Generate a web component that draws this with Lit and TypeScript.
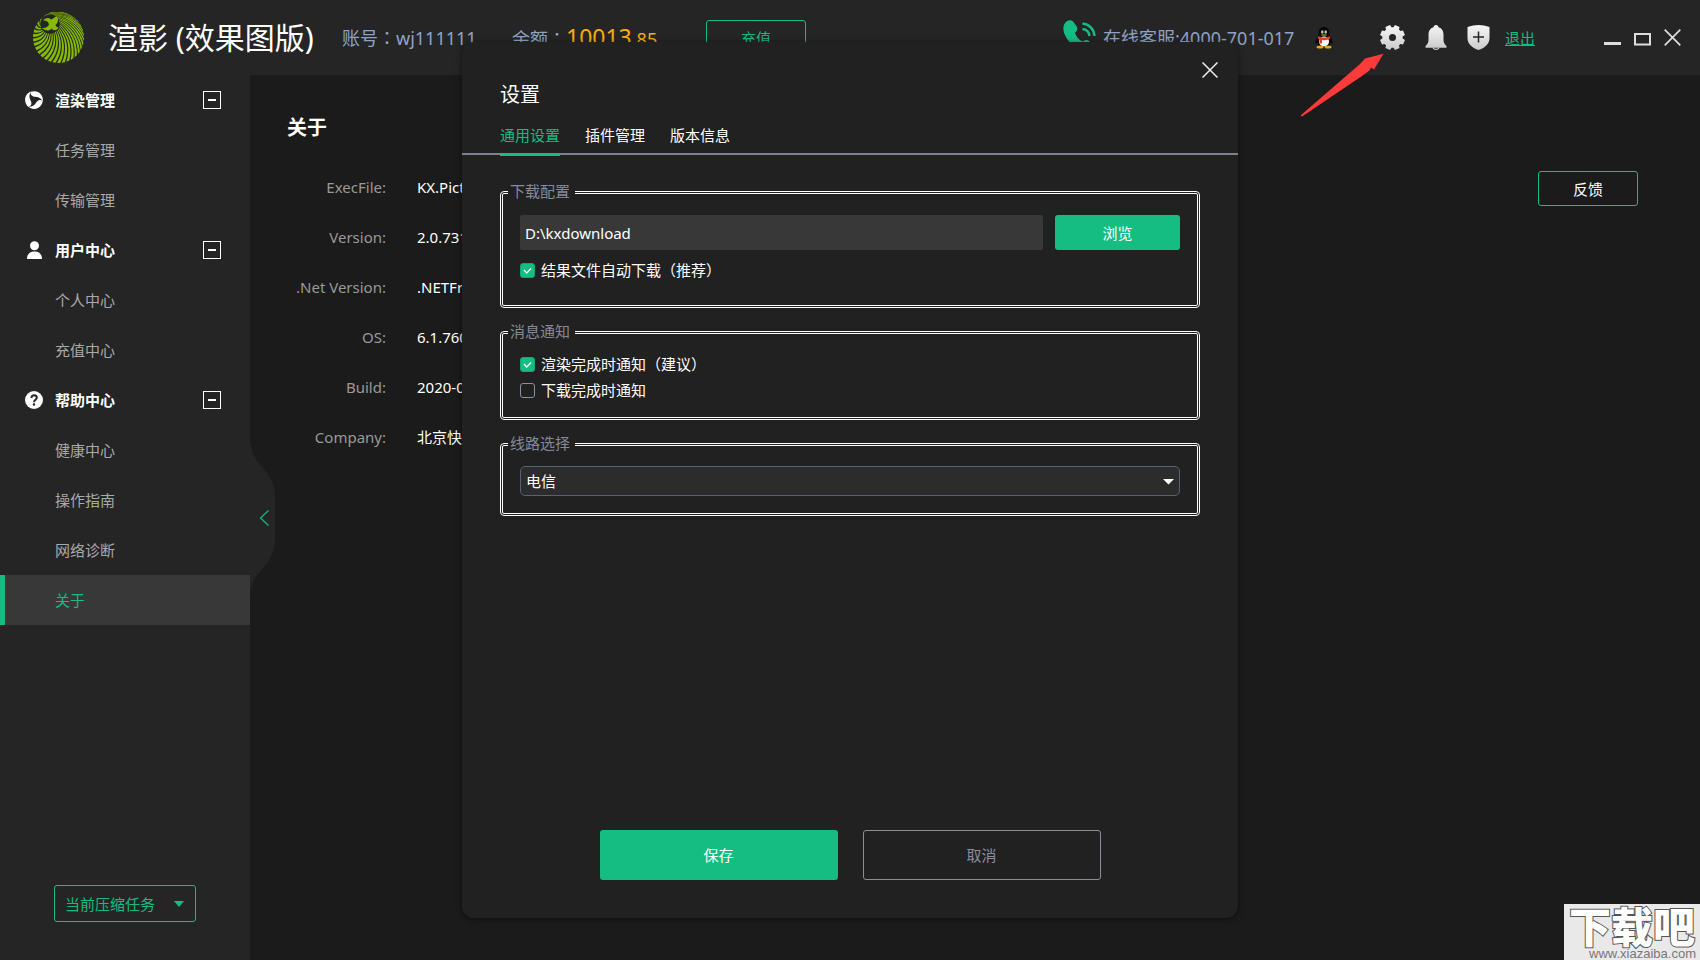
import { LitElement, html, css, svg } from "lit";
import { customElement, state } from "lit/decorators.js";

interface NavGroup {
  icon: "render" | "user" | "help";
  title: string;
  items: string[];
}

const NAV: NavGroup[] = [
  { icon: "render", title: "渲染管理", items: ["任务管理", "传输管理"] },
  { icon: "user", title: "用户中心", items: ["个人中心", "充值中心"] },
  { icon: "help", title: "帮助中心", items: ["健康中心", "操作指南", "网络诊断", "关于"] },
];

const ABOUT: [string, string][] = [
  ["ExecFile:", "KX.Pict"],
  ["Version:", "2.0.731"],
  [".Net Version:", ".NETFr"],
  ["OS:", "6.1.760"],
  ["Build:", "2020-0"],
  ["Company:", "北京快"],
];

const TABS = ["通用设置", "插件管理", "版本信息"];

/* Swirling feather strokes running from the hub to the rim of the logo. */
function feathers(): string[] {
  const count = 34;
  const hub = { x: 17, y: 12, r: 9.5 };
  const rim = { x: 25.5, y: 25.5, r: 25.5 };
  const at = (c: { x: number; y: number; r: number }, a: number) =>
    [c.x + Math.cos(a) * c.r, c.y + Math.sin(a) * c.r] as const;
  const f = (p: readonly [number, number]) => `${p[0].toFixed(2)} ${p[1].toFixed(2)}`;
  const out: string[] = [];
  for (let i = 0; i < count; i++) {
    const a = (i / count) * Math.PI * 2;
    const step = (Math.PI * 2) / count;
    const s = at(hub, a);
    const s2 = at(hub, a + step * 0.5);
    const e = at(rim, a + 0.95);
    const e2 = at(rim, a + 0.95 + step * 0.66);
    const mid = (p: readonly [number, number], q: readonly [number, number], b: number) => {
      const dx = q[0] - p[0];
      const dy = q[1] - p[1];
      return [(p[0] + q[0]) / 2 + dy * b, (p[1] + q[1]) / 2 - dx * b] as const;
    };
    out.push(`M${f(s)}Q${f(mid(s, e, 0.28))} ${f(e)}L${f(e2)}Q${f(mid(s2, e2, 0.28))} ${f(s2)}Z`);
  }
  return out;
}

function gearPath(): string {
  const pts: string[] = [];
  const teeth = 8;
  for (let i = 0; i < teeth; i++) {
    const base = (i / teeth) * Math.PI * 2 + Math.PI / 8;
    for (const [off, r] of [[-0.29, 10.2], [-0.2, 12.7], [0.2, 12.7], [0.29, 10.2]]) {
      const a = base + off;
      pts.push(`${(12.5 + Math.cos(a) * r).toFixed(2)} ${(12.5 + Math.sin(a) * r).toFixed(2)}`);
    }
  }
  return `M${pts.join("L")}ZM12.5 9a3.5 3.5 0 1 0 0 7a3.5 3.5 0 1 0 0-7Z`;
}

const silver = (id: string) => svg`<linearGradient id=${id} x1="0" y1="0" x2="0" y2="1">
  <stop offset="0" stop-color="#f6f6f6"/><stop offset="1" stop-color="#cccccc"/></linearGradient>`;

const navIcons = {
  render: html`<svg width="18" height="18" viewBox="0 0 18 18" aria-hidden="true">
    <g fill="#fff">
      <path id="blade" d="M6.2 .6C2.6 1.700 .1 5 .1 8.900c0 2.900 1.400 5.400 3.500 7C6.200 15.300 6.900 13 6.200 10.800C5.400 8.600 4.300 7.500 4.500 5.200C4.600 3.200 5.200 1.700 6.200 .6Z"/>
      <use href="#blade" transform="rotate(120 9 9)"/>
      <use href="#blade" transform="rotate(240 9 9)"/>
    </g></svg>`,
  user: html`<svg width="18" height="18" viewBox="0 0 18 18" aria-hidden="true">
    <g fill="#fff"><circle cx="9.500" cy="4.800" r="4.500"/><path d="M2 18c0-4.500 2.200-7.600 7.500-7.600S17 13.500 17 18Z"/></g></svg>`,
  help: html`<svg width="18" height="18" viewBox="0 0 18 18" aria-hidden="true">
    <circle cx="9" cy="9" r="9" fill="#fff"/>
    <path d="M6.400 7C6.400 5.200 7.500 4.200 9.100 4.200S11.800 5.200 11.800 6.700C11.800 8.700 9 8.800 9 11.200" fill="none" stroke="#252525" stroke-width="1.900"/>
    <circle cx="9" cy="13.500" r="1.200" fill="#252525"/></svg>`,
};

@customElement("app-root")
export class AppRoot extends LitElement {
  @state() private tab = 0;
  @state() private active = "关于";

  static styles = css`
    :host {
      display: flex;
      flex-direction: column;
      min-height: 100vh;
      position: relative;
      overflow: hidden;
      background: #1b1b1b;
      color: #fff;
      font-family: "Noto Sans", "Noto Sans CJK SC", sans-serif;
      font-size: 15px;
      line-height: 20px;
    }
    *, *::before, *::after { box-sizing: border-box; }
    button {
      font: inherit;
      color: inherit;
      background: none;
      border: 0;
      padding: 0;
      cursor: pointer;
    }
    svg { display: block; flex: none; }
    h1, h2, h3, dl, dd, ul { margin: 0; padding: 0; }
    a { color: inherit; }

    .header {
      display: flex;
      align-items: center;
      height: 75px;
      padding: 0 19px 0 33px;
      background: #252525;
      white-space: nowrap;
    }
    .brand {
      font-size: 30px;
      line-height: 40px;
      font-weight: 400;
      min-width: 234px;
      margin-left: 24px;
    }
    .meta { font-size: 18px; line-height: 24px; color: #8ea3c5; }
    .account { min-width: 170px; }
    .balance { min-width: 194px; }
    .colon { font-family: "Noto Sans CJK TC", sans-serif; }
    .money { color: #f9ad0a; }
    .big { font-size: 23px; }
    .outline {
      width: 100px;
      height: 35px;
      border: 1px solid #15bd82;
      border-radius: 3px;
    }
    .green { color: #15bd82; }
    .tools { display: flex; align-items: center; margin-left: auto; }
    .hotline { width: 192px; margin: 0 20px 0 7px; }
    .iconset { display: flex; align-items: center; gap: 20px; margin: 0 15px 0 47px; }
    .window { display: flex; gap: 13px; margin-left: 69px; }

    .body { display: flex; flex: 1; }
    .side {
      position: relative;
      display: flex;
      flex-direction: column;
      width: 250px;
      background: #252525;
    }
    .group {
      display: flex;
      align-items: center;
      height: 50px;
      padding: 0 29px 0 25px;
      font-weight: 700;
      gap: 12px;
    }
    .group h3 { font-size: 15px; line-height: 20px; flex: 1; }
    .fold {
      display: grid;
      place-items: center;
      width: 18px;
      height: 18px;
      border: 1px solid #fff;
    }
    .fold::before { content: ""; width: 8px; height: 2px; background: #fff; }
    .items { list-style: none; }
    .item {
      display: flex;
      align-items: center;
      height: 50px;
      padding-left: 50px;
      border-left: 5px solid transparent;
      color: #a9a9a9;
      text-decoration: none;
    }
    .item.on { background: #383838; border-color: #15bd82; color: #15bd82; }
    .handle {
      position: absolute;
      left: 100%;
      top: 50%;
      transform: translateY(-50%);
      z-index: 1;
    }
    .tasks {
      display: flex;
      align-items: center;
      justify-content: space-between;
      width: 142px;
      height: 37px;
      margin: auto 0 38px 54px;
      padding: 0 11px 0 10px;
      border: 1px solid #15bd82;
      border-radius: 3px;
      color: #15bd82;
    }

    .main {
      display: flex;
      flex: 1;
      align-items: flex-start;
      justify-content: space-between;
      padding: 39px 62px 0 37px;
    }
    .main h2 { font-size: 20px; line-height: 28px; font-weight: 700; }
    .facts {
      display: grid;
      grid-template-columns: 99px auto;
      column-gap: 31px;
      margin-top: 20px;
    }
    .facts dt, .facts dd { line-height: 50px; white-space: nowrap; }
    .facts dt { text-align: right; color: #999; }
    .feedback { margin-top: 57px; }

    .dialog {
      position: absolute;
      top: 42px;
      bottom: 42px;
      left: 50%;
      width: 776px;
      max-width: 100%;
      transform: translateX(-50%);
      z-index: 2;
      display: flex;
      flex-direction: column;
      border-radius: 12px;
      background: #212121;
      box-shadow: 0 1px 6px rgba(0, 0, 0, 0.5);
    }
    .top {
      display: flex;
      justify-content: space-between;
      align-items: flex-start;
      padding: 20px 20px 0 38px;
    }
    .top h2 { font-size: 20px; line-height: 28px; font-weight: 400; margin-top: 19px; }
    .tabs {
      display: flex;
      gap: 25px;
      height: 34px;
      margin-top: 12px;
      padding: 0 38px;
      border-bottom: 2px solid #7d818e;
    }
    .tab { height: 35px; padding-bottom: 4px; border-bottom: 3px solid transparent; }
    .tab.on { color: #15bd82; border-color: #15bd82; }
    .form { display: flex; flex-direction: column; gap: 13px; padding: 26px 38px 0; }
    .box {
      min-width: 0;
      margin: 0;
      padding: 12px 17px 25px;
      border: 3px double #fff;
      border-radius: 4px;
    }
    .box.short { padding: 11px 17px 17px; }
    .box legend {
      margin-left: -12px;
      padding: 0 5px 2px 2px;
      color: #858a9a;
      line-height: 20px;
    }
    .path { display: flex; gap: 12px; margin-bottom: 10px; }
    .path input {
      flex: 1;
      min-width: 0;
      height: 35px;
      padding: 0 5px;
      border: 0;
      border-radius: 2px;
      background: #383838;
      color: #fff;
      font: inherit;
    }
    .primary { background: #15bd82; border-radius: 3px; }
    .browse { width: 125px; height: 35px; }
    .check { display: flex; align-items: center; gap: 6px; height: 20px; }
    .check + .check { margin-top: 6px; }
    .check input {
      appearance: none;
      width: 15px;
      height: 15px;
      margin: 0;
      border: 1px solid #8a90a3;
      border-radius: 3px;
    }
    .check input:checked {
      border-color: #15a574;
      background: #15bd82 url("data:image/svg+xml,%3Csvg xmlns='http://www.w3.org/2000/svg' viewBox='0 0 13 13'%3E%3Cpath d='M3 6l2.700 3L10 4.500' fill='none' stroke='white' stroke-width='1.300'/%3E%3C/svg%3E") center / 13px no-repeat;
    }
    .pick { position: relative; display: block; }
    .pick select {
      appearance: none;
      display: block;
      width: 100%;
      height: 30px;
      padding: 0 5px;
      border: 1px solid #566176;
      border-radius: 5px;
      background: #2c2c2c;
      color: #fff;
      font: inherit;
    }
    .pick svg { position: absolute; right: 6px; top: 13px; pointer-events: none; }
    .actions { display: flex; justify-content: center; gap: 25px; margin: auto 0 38px; }
    .actions button { width: 238px; height: 50px; border-radius: 3px; }
    .cancel { border: 1px solid #8a8e9c; color: #8a8e9c; }

    .pointer { position: absolute; right: 316px; top: 53px; z-index: 3; pointer-events: none; }
    .stamp {
      position: absolute;
      right: 0;
      bottom: 0;
      z-index: 3;
      display: flex;
      flex-direction: column;
      justify-content: space-between;
      width: 136px;
      height: 56px;
      padding: 0 4px;
      background: #e9e9e9;
    }
    .stamp b {
      color: #fff;
      font: 900 42px/42px "Noto Sans CJK SC", sans-serif;
      text-align: center;
      -webkit-text-stroke: 2px #555;
      paint-order: stroke fill;
    }
    .stamp small {
      color: #777;
      font: 400 13px/13px "Liberation Sans", sans-serif;
      text-align: right;
    }
  `;

  private header() {
    return html`<header class="header">
      <svg width="51" height="51" viewBox="0 0 51 51" aria-hidden="true">
        <g fill="#86bc00">
          ${feathers().map((d) => svg`<path d=${d}/>`)}
          <circle cx="17" cy="12" r="9.500" fill="#252525"/>
          <path d="M10 8.500C12 5.500 16 5 18.500 7.500C21 6 21.500 4.500 24 4.500C26 7 25 11 22.500 13C23 15 24.500 15 25.500 15.500C24 19 20.500 19 18.500 16.500C16 19.500 12 19 9 16C12.500 16.500 15 15 16 12.500C15.500 9.500 13 8 10 8.500Z"/>
        </g>
      </svg>
      <h1 class="brand">渲影 (效果图版)</h1>
      <span class="meta account">账号<span class="colon">：</span>wj111111</span>
      <span class="meta balance">余额<span class="colon">：</span><span class="money"><span class="big">10013</span>.85</span></span>
      <button class="outline green">充值</button>
      <div class="tools">
        <svg width="33" height="35" viewBox="0 0 33 35" aria-hidden="true">
          <path fill="#15bd82" d="M2.500 2.500C5-.5 8.500-.5 10.500 2L14 7C15 9 14 11 12 13C13 16.500 16 20 19.500 21.500C22 20 24 19.500 26 21L31 25C33 27 32 30 29 32C24 35.500 17 33 10.500 26.500C3 19-3 9 2.500 2.500Z"/>
          <path fill="none" stroke="#15bd82" stroke-width="2.400" d="M19.500 3.500C26 4 31 9 31.500 16M19.500 9C23.500 9.500 26 12 26.500 16"/>
        </svg>
        <span class="meta hotline">在线客服:4000-701-017</span>
        <svg width="18" height="22" viewBox="0 0 18 22" aria-hidden="true">
          <path fill="#080808" d="M9 0C5.500 0 3.700 2.500 3.700 6C3.700 9 .3 12 .3 15.500C.3 17 1.500 16.500 2.300 15.500C3 19 5.500 20.500 9 20.500S15 19 15.700 15.500C16.500 16.500 17.700 17 17.700 15.500C17.700 12 14.300 9 14.300 6C14.300 2.500 12.500 0 9 0Z"/>
          <ellipse cx="9" cy="14.500" rx="5" ry="5" fill="#fff"/>
          <ellipse cx="7.300" cy="5" rx="1.300" ry="1.800" fill="#bbb"/><ellipse cx="10.700" cy="5" rx="1.300" ry="1.800" fill="#bbb"/>
          <ellipse cx="9" cy="8" rx="3" ry="1" fill="#8a6a20"/>
          <path fill="#e23b2e" d="M3.500 9C7 11 11 11 14.500 9L15.500 11.500C13 13 9.500 13.500 7 13V16.500H4.500V12.500L2.500 11.500Z"/>
          <ellipse cx="5" cy="20" rx="3.500" ry="1.500" fill="#e8a51c"/><ellipse cx="13" cy="20" rx="3.500" ry="1.500" fill="#e8a51c"/>
        </svg>
        <div class="iconset">
          <button aria-label="设置">
            <svg width="25" height="25" viewBox="0 0 25 25"><defs>${silver("g1")}</defs>
              <path fill="url(#g1)" fill-rule="evenodd" d=${gearPath()}/></svg>
          </button>
          <button aria-label="消息">
            <svg width="22" height="25" viewBox="0 0 22 25"><defs>${silver("g2")}</defs>
              <path fill="url(#g2)" d="M11 0C12.500 0 13.300 1 13.500 2.200C17 3.300 18.500 6 18.500 9.500V15C18.500 18 19.800 19.500 21.500 21V22.800H.5V21C2.200 19.500 3.500 18 3.500 15V9.500C3.500 6 5 3.300 8.500 2.200C8.700 1 9.500 0 11 0Z"/>
              <path fill="none" stroke="#ccc" stroke-width="1.200" d="M8 22.500C8.500 25 13.500 25 14 22.500"/></svg>
          </button>
          <button aria-label="安全">
            <svg width="23" height="25" viewBox="0 0 23 25"><defs>${silver("g3")}</defs>
              <path fill="url(#g3)" d="M11.500 0C15 0 19 .7 22.500 2V13C22.500 19 17.500 23 11.500 25C5.500 23 .5 19 .5 13V2C4 .7 8 0 11.500 0Z"/>
              <path stroke="#252525" stroke-width="1.500" d="M11.500 6.500V17.500M6 12H17"/></svg>
          </button>
        </div>
        <a class="green" href="#logout">退出</a>
        <div class="window">
          <button aria-label="最小化"><svg width="17" height="17" viewBox="0 0 17 17"><path fill="#ddd" d="M0 13H17V16H0Z"/></svg></button>
          <button aria-label="最大化"><svg width="17" height="17" viewBox="0 0 17 17"><path fill="none" stroke="#ddd" stroke-width="2" d="M1 5H16V15.500H1Z"/></svg></button>
          <button aria-label="关闭窗口"><svg width="17" height="17" viewBox="0 0 17 17"><path stroke="#ddd" stroke-width="1.700" d="M.7.7L16.300 16.300M16.300.7L.7 16.300"/></svg></button>
        </div>
      </div>
    </header>`;
  }

  private sidebar() {
    return html`<nav class="side">
      ${NAV.map((g) => html`
        <div class="group">
          ${navIcons[g.icon]}
          <h3>${g.title}</h3>
          <button class="fold" aria-label="收起${g.title}"></button>
        </div>
        <ul class="items">
          ${g.items.map((t) => html`<li>
            <a class="item ${t === this.active ? "on" : ""}" href="#${t}" @click=${() => (this.active = t)}>${t}</a>
          </li>`)}
        </ul>`)}
      <button class="tasks">当前压缩任务
        <svg width="10" height="6" viewBox="0 0 10 6" aria-hidden="true"><path fill="#15bd82" d="M0 0H10L5 6Z"/></svg>
      </button>
      <button class="handle" aria-label="收起侧栏">
        <svg width="25" height="156" viewBox="0 0 25 156">
          <path fill="#252525" d="M0 0C1 14 7 21 13 28C20 36 25 45 25 55V101C25 111 20 120 13 128C7 135 1 142 0 156Z"/>
          <path fill="none" stroke="#15bd82" stroke-width="1.200" d="M18.500 70.500L10.500 78L18.500 85.500"/>
        </svg>
      </button>
    </nav>`;
  }

  private dialog() {
    return html`<section class="dialog" role="dialog" aria-label="设置">
      <div class="top">
        <h2>设置</h2>
        <button aria-label="关闭">
          <svg width="16" height="16" viewBox="0 0 16 16"><path stroke="#eee" stroke-width="1.500" d="M.5.5L15.500 15.500M15.500.5L.5 15.500"/></svg>
        </button>
      </div>
      <div class="tabs" role="tablist">
        ${TABS.map((t, i) => html`<button role="tab" aria-selected=${i === this.tab} class="tab ${i === this.tab ? "on" : ""}"
          @click=${() => (this.tab = i)}>${t}</button>`)}
      </div>
      <div class="form">
        <fieldset class="box">
          <legend>下载配置</legend>
          <div class="path">
            <input type="text" aria-label="下载目录" .value=${"D:\\kxdownload"} />
            <button class="primary browse">浏览</button>
          </div>
          <label class="check"><input type="checkbox" checked />结果文件自动下载（推荐）</label>
        </fieldset>
        <fieldset class="box short">
          <legend>消息通知</legend>
          <label class="check"><input type="checkbox" checked />渲染完成时通知（建议）</label>
          <label class="check"><input type="checkbox" />下载完成时通知</label>
        </fieldset>
        <fieldset class="box short">
          <legend>线路选择</legend>
          <label class="pick">
            <select aria-label="线路选择"><option>电信</option></select>
            <svg width="11" height="6" viewBox="0 0 11 6" aria-hidden="true"><path fill="#fff" d="M0 0H11L5.500 5.500Z"/></svg>
          </label>
        </fieldset>
      </div>
      <div class="actions">
        <button class="primary">保存</button>
        <button class="cancel">取消</button>
      </div>
    </section>`;
  }

  render() {
    return html`
      ${this.header()}
      <div class="body">
        ${this.sidebar()}
        <main class="main">
          <div>
            <h2>关于</h2>
            <dl class="facts">${ABOUT.map(([k, v]) => html`<dt>${k}</dt><dd>${v}</dd>`)}</dl>
          </div>
          <button class="outline feedback">反馈</button>
        </main>
      </div>
      ${this.dialog()}
      <svg class="pointer" width="84" height="64" viewBox="0 0 84 64" aria-hidden="true">
        <path fill="#ff3a3a" d="M.5 62.500L60 11L65 5.500L83.500 .8L74 16.500L71 14.500L69.500 17.500L62 23L2 63.500Z"/>
      </svg>
      <div class="stamp"><b>下载吧</b><small>www.xiazaiba.com</small></div>
    `;
  }
}
